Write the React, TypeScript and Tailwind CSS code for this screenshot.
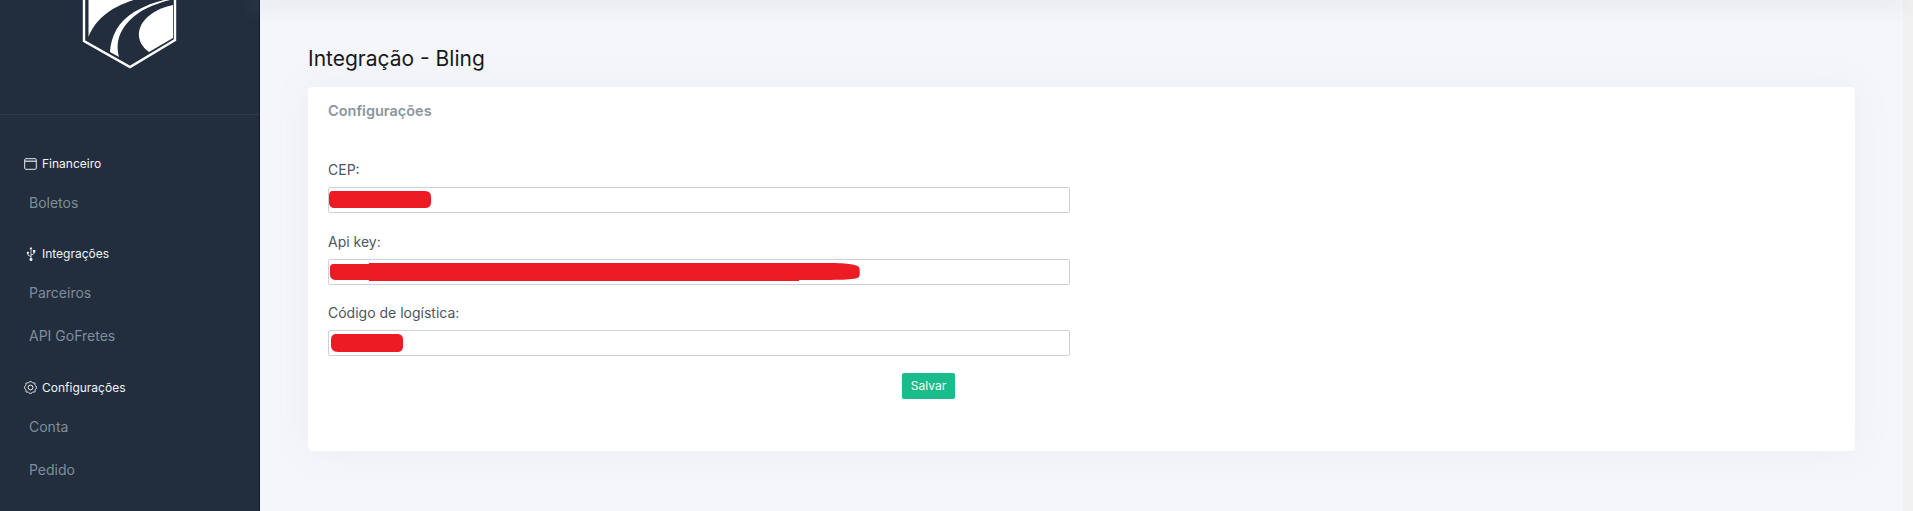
import React from "react";
import { FaUsb } from "react-icons/fa";

function Logo() {
  return (
    <svg width="100" height="70" viewBox="0 0 100 70" className="block">
      <path d="M2 -5V41L48 67L93 40V-5" fill="none" stroke="#fff" strokeWidth="2.4" />
      <path d="M6.5 -2H58C30 6 14 18 6.5 37Z" fill="#fff" />
      <path d="M28 52C29 36 36 22 52 12C64 5 76 1 87 -1L88 0C72 4 58 10 48 20C38 30 33 42 37 57Z" fill="#fff" />
      <path d="M91 5V38L67 52C60 47 56 40 57 32C59 18 75 8 91 5Z" fill="#fff" />
    </svg>
  );
}

function WindowIcon() {
  return (
    <svg width="13" height="12" viewBox="0 0 13 12" fill="none" stroke="#e8eaed" strokeWidth="1">
      <rect x="0.7" y="0.7" width="11.6" height="10.6" rx="1" />
      <path d="M0.7 3.2H12.3" strokeWidth="1.2" />
    </svg>
  );
}

function GearIcon() {
  return (
    <svg width="13" height="13" viewBox="0 0 13 13" fill="none" stroke="#f1f3f5" strokeWidth="1">
      <path d="M5 1.2C5.5.4 7.5.4 8 1.2 8.5 2 9 2.2 9.9 1.9 10.8 1.7 11.3 2.2 11.1 3.1 10.8 4 11 4.5 11.8 5 12.6 5.5 12.6 7.5 11.8 8 11 8.5 10.8 9 11.1 9.9 11.3 10.8 10.8 11.3 9.9 11.1 9 10.8 8.5 11 8 11.8 7.5 12.6 5.5 12.6 5 11.8 4.5 11 4 10.8 3.1 11.1 2.2 11.3 1.7 10.8 1.9 9.9 2.2 9 2 8.5 1.2 8 .4 7.5.4 5.5 1.2 5 2 4.5 2.2 4 1.9 3.1 1.7 2.2 2.2 1.7 3.1 1.9 4 2.2 4.5 2 5 1.2Z" strokeLinejoin="round" />
      <circle cx="6.5" cy="6.5" r="2.4" />
    </svg>
  );
}

function Section({ icon, title, items }: { icon: React.ReactNode; title: string; items: string[] }) {
  return (
    <div className="mb-[20.5px]">
      <div className="flex h-[20px] items-center pl-[24px] text-[12px] text-[#f1f3f5]">
        <span className="flex w-[18px] items-center">{icon}</span>
        {title}
      </div>
      <div className="mt-[7px] flex flex-col">
        {items.map((t) => (
          <div key={t} className="flex h-[43px] items-center pl-[29px] text-[14px] text-[#7f8d9c]">
            {t}
          </div>
        ))}
      </div>
    </div>
  );
}

function Field({ label, scribble, w }: { label: string; scribble: React.ReactNode; w: number }) {
  return (
    <div>
      <div className="mb-[7px] h-[21px] text-[14px] leading-[21px] text-[#4b5563]">{label}</div>
      <div className="flex h-[26px] w-[742px] items-center rounded-[2px] border border-[#ced1da] bg-white">
        <svg width={w} height="20" viewBox={`0 0 ${w} 20`} className="block">
          {scribble}
        </svg>
      </div>
    </div>
  );
}

export default function App() {
  return (
    <div className="flex h-[511px] w-[1913px] overflow-hidden bg-[#f1f1f1] font-['Inter',sans-serif]">
      <aside className="h-full w-[260px] shrink-0 border-r border-[#141c28] bg-[#222e3d]">
        <div className="flex h-[115px] justify-center border-b border-[#2d3a4b] pr-[1px]">
          <div className="ml-[5px]"><Logo /></div>
        </div>
        <div className="pt-[38.5px]">
          <Section icon={<WindowIcon />} title="Financeiro" items={["Boletos"]} />
          <Section icon={<FaUsb size={14} color="#f1f3f5" className="-rotate-90" />} title="Integrações" items={["Parceiros", "API GoFretes"]} />
          <Section icon={<GearIcon />} title="Configurações" items={["Conta", "Pedido"]} />
        </div>
      </aside>
      <main className="h-full w-[1643px] shrink-0 bg-[#f5f6fb]">
        <div className="h-0 w-full shadow-[0_0_22px_6px_rgba(154,161,171,0.2)]" />
        <div className="px-[48px] pt-[46px]">
          <h1 className="h-[26px] text-[21px] leading-[26px] font-normal text-[#161a20]">Integração - Bling</h1>
          <section className="mt-[15px] h-[364px] w-[1547px] rounded-[4px] bg-white px-[20px] pt-[14px] shadow-[0_0_35px_0_rgba(154,161,171,0.1)]">
            <h2 className="h-[20px] text-[14.5px] leading-[20px] font-semibold text-[#8a969f]">Configurações</h2>
            <div className="mt-[38px] flex flex-col gap-[17.5px]">
              <Field
                label="CEP:"
                w={104}
                scribble={<path d="M3 1H95C100 1 102 3 102 7V13C102 16 100 18 95 18H6C2 18 0 16 0 12V6C0 3 1 1 3 1Z" fill="#ed1c24" />}
              />
              <Field
                label="Api key:"
                w={532}
                scribble={<path d="M5 2H40V1H500C520 1 528 3 530 5C531 7 531 13 530 15C527 18 510 18 470 18V19H40V18H8C3 18 1 16 1 12V6C1 3 2 2 5 2Z" fill="#ed1c24" />}
              />
              <Field
                label="Código de logística:"
                w={76}
                scribble={<path d="M7 1H68C72 1 74 3 74 7V13C74 17 72 19 68 19H9C4 19 2 16 2 12V7C2 3 4 1 7 1Z" fill="#ed1c24" />}
              />
            </div>
            <button className="mt-[17px] ml-[574px] block h-[26px] w-[53px] rounded-[2px] bg-[#1abc8c] text-center text-[12px] text-white">Salvar</button>
          </section>
        </div>
      </main>
    </div>
  );
}
